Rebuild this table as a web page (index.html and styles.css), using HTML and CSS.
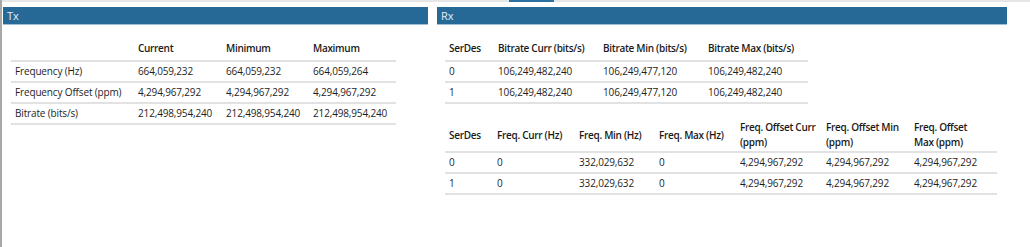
FILE: index.html
```html
<!DOCTYPE html>
<html>
<head>
<meta charset="utf-8">
<link rel="stylesheet" href="styles.css">
</head>
<body>
<div class="frame">
  <div class="topstrip"><span class="toptab"></span></div>
  <div class="panels">
    <section class="panel panel-tx">
      <div class="bar">Tx</div>
      <table class="grid tx">
        <colgroup><col class="c123"><col class="c88"><col class="c87"><col class="c87"></colgroup>
        <thead>
          <tr><th></th><th>Current</th><th>Minimum</th><th>Maximum</th></tr>
        </thead>
        <tbody>
          <tr><td>Frequency (Hz)</td><td>664,059,232</td><td>664,059,232</td><td>664,059,264</td></tr>
          <tr><td>Frequency Offset (ppm)</td><td>4,294,967,292</td><td>4,294,967,292</td><td>4,294,967,292</td></tr>
          <tr><td>Bitrate (bits/s)</td><td>212,498,954,240</td><td>212,498,954,240</td><td>212,498,954,240</td></tr>
        </tbody>
      </table>
    </section>
    <section class="panel panel-rx">
      <div class="bar">Rx</div>
      <table class="grid rx1">
        <colgroup><col class="c49"><col class="c105"><col class="c105"><col class="c104"></colgroup>
        <thead>
          <tr><th>SerDes</th><th>Bitrate Curr (bits/s)</th><th>Bitrate Min (bits/s)</th><th>Bitrate Max (bits/s)</th></tr>
        </thead>
        <tbody>
          <tr><td>0</td><td>106,249,482,240</td><td>106,249,477,120</td><td>106,249,482,240</td></tr>
          <tr><td>1</td><td>106,249,482,240</td><td>106,249,477,120</td><td>106,249,482,240</td></tr>
        </tbody>
      </table>
      <table class="grid rx2">
        <colgroup><col class="c48"><col class="c82"><col class="c80"><col class="c81"><col class="c86"><col class="c88"><col class="c87"></colgroup>
        <thead>
          <tr><th>SerDes</th><th>Freq. Curr (Hz)</th><th>Freq. Min (Hz)</th><th>Freq. Max (Hz)</th><th>Freq. Offset Curr<br>(ppm)</th><th>Freq. Offset Min<br>(ppm)</th><th>Freq. Offset<br>Max (ppm)</th></tr>
        </thead>
        <tbody>
          <tr><td>0</td><td>0</td><td>332,029,632</td><td>0</td><td>4,294,967,292</td><td>4,294,967,292</td><td>4,294,967,292</td></tr>
          <tr><td>1</td><td>0</td><td>332,029,632</td><td>0</td><td>4,294,967,292</td><td>4,294,967,292</td><td>4,294,967,292</td></tr>
        </tbody>
      </table>
    </section>
  </div>
</div>
</body>
</html>
```
FILE: styles.css
```css
html, body {
  margin: 0;
  padding: 0;
  background: #ffffff;
}
body {
  font-family: "Open Sans", "Noto Sans", sans-serif;
  font-size: 10px;
  color: #1e1e1e;
}
.frame {
  width: 1028px;
  height: 247px;
  border-left: 2px solid #a8a8a8;
  box-sizing: content-box;
}
.topstrip {
  height: 2px;
  background: #e6e6e6;
  position: relative;
}
.toptab {
  position: absolute;
  left: 507px;
  top: 0;
  width: 45px;
  height: 2px;
  background: #2b6fa3;
}
.panels {
  display: flex;
  gap: 9px;
  padding: 5px 0 0 1px;
}
.panel-tx { width: 425px; }
.panel-rx { width: 570px; }
.bar {
  height: 17px;
  background: #276996;
  border-bottom: 1px solid #9fc0d8;
  color: #e8eef4;
  font-size: 11px;
  line-height: 17px;
  padding-left: 4px;
}
.grid {
  border-collapse: collapse;
  table-layout: fixed;
  margin-left: 8px;
}
.grid th {
  font-weight: 600;
  letter-spacing: -0.3px;
  text-align: left;
  padding: 0 4px;
  height: 24px;
  line-height: 15px;
  vertical-align: middle;
  border-bottom: 2px solid #e2e2e2;
  color: #1a1a1a;
  white-space: nowrap;
}
.grid td {
  padding: 0 4px;
  height: 19px;
  line-height: 15px;
  vertical-align: middle;
  border-bottom: 2px solid #e2e2e2;
  white-space: nowrap;
  letter-spacing: -0.15px;
}
.tx { margin-top: 11px; }
.rx1 { margin-top: 11px; }
.rx2 { margin-top: 15px; }
.rx2 th { height: 32px; }
.c123 { width: 123px; }
.c88 { width: 88px; }
.c87 { width: 87px; }
.c49 { width: 49px; }
.c105 { width: 105px; }
.c104 { width: 104px; }
.c48 { width: 48px; }
.c82 { width: 82px; }
.c80 { width: 80px; }
.c81 { width: 81px; }
.c86 { width: 86px; }
```
